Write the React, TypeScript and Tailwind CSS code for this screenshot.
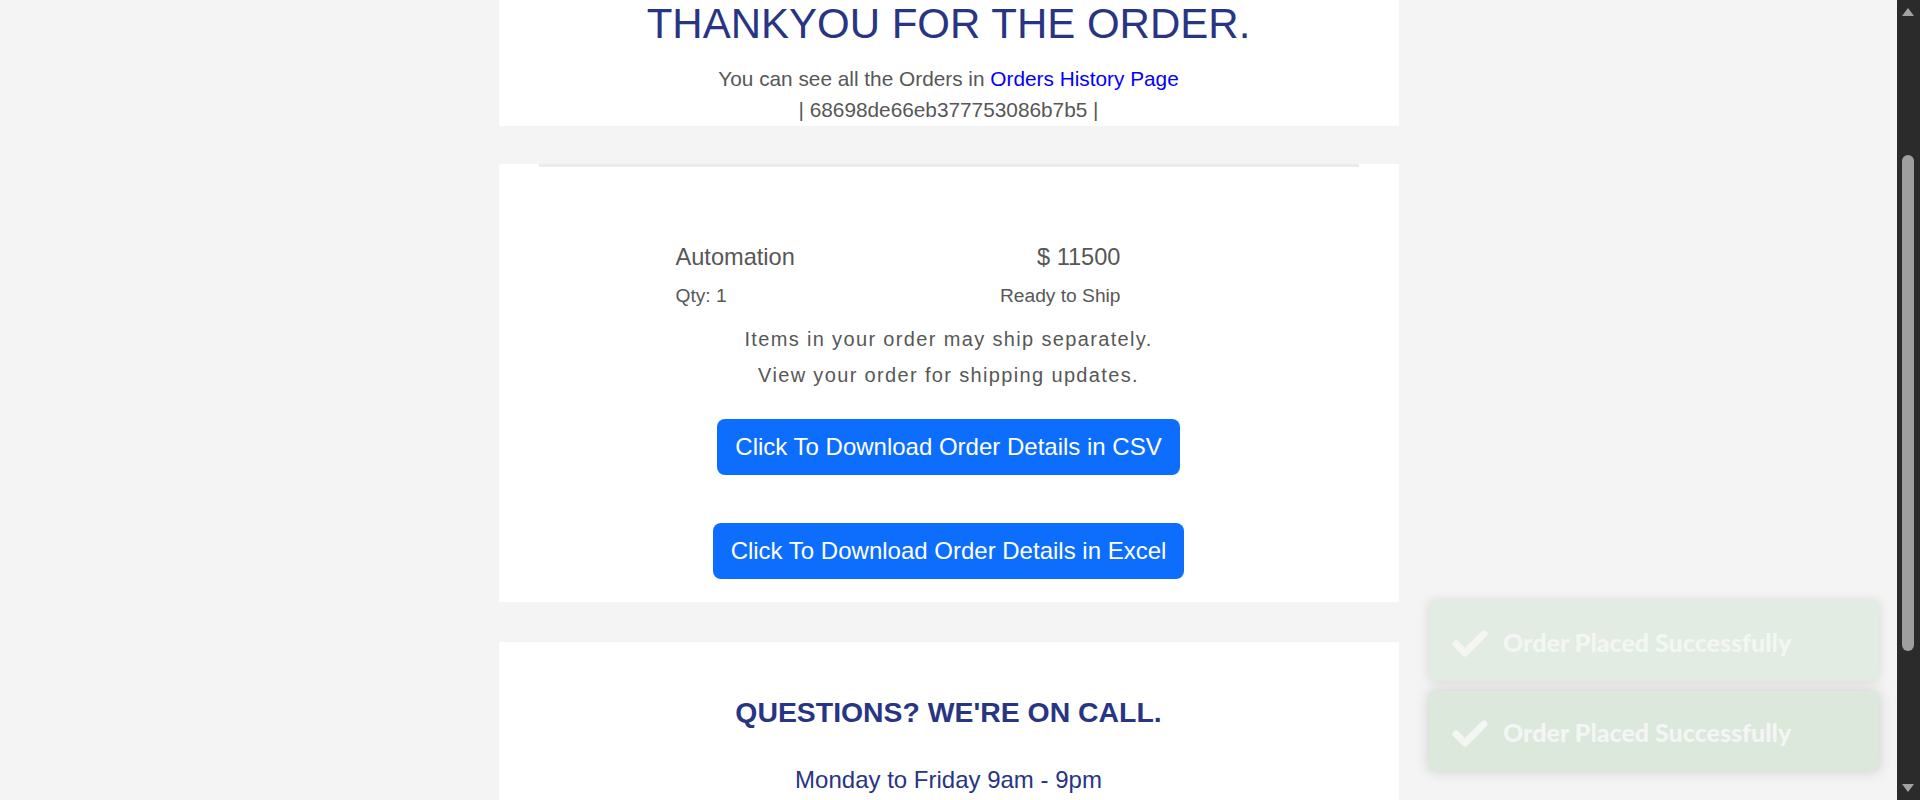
const NAVY = 'text-[#283583]';

function Toast({ tone }: { tone: string }) {
    return (
        <div className={`flex h-[80px] items-center rounded-[4px] pl-[22px] shadow-[0_0_12px_rgba(0,0,0,0.12)] ${tone}`}>
            <svg width="38" height="30" viewBox="0 0 38 30" className="mt-[3px] shrink-0">
                <polyline
                    points="5,16 14,25 33,6"
                    fill="none"
                    stroke="#f4f6f4"
                    strokeWidth="7"
                    strokeLinecap="round"
                    strokeLinejoin="round"
                />
            </svg>
            <span className="ml-[14px] mt-[3px] font-['Lato',sans-serif] text-[25px] font-black text-[#f4f6f4]">
                Order Placed Successfully
            </span>
        </div>
    );
}

function ScrollBar() {
    return (
        <div className="relative h-full w-[23px] shrink-0 bg-[#2b2b2b]">
            <svg width="14" height="10" viewBox="0 0 14 10" className="absolute left-[4px] top-[7px]">
                <polygon points="7,1 13,9 1,9" fill="#a3a3a3" />
            </svg>
            <div className="absolute left-[5px] top-[155px] h-[496px] w-[12px] rounded-full bg-[#9f9f9f]" />
            <svg width="14" height="10" viewBox="0 0 14 10" className="absolute bottom-[7px] left-[4px]">
                <polygon points="1,1 13,1 7,9" fill="#a3a3a3" />
            </svg>
        </div>
    );
}

export default function App() {
    return (
        <div className="flex h-[800px] overflow-hidden bg-[#f4f4f4] font-['Liberation_Sans',Arial,sans-serif]">
            <main className="relative flex-1">
                <div className="mx-auto w-[900px]">
                    {/* header */}
                    <section className="h-[126px] bg-white text-center">
                        <h1 className={`text-[42px] leading-[48px] ${NAVY}`}>THANKYOU FOR THE ORDER.</h1>
                        <p className="mt-[15px] text-[20.8px] leading-[31px] text-[#575757]">
                            You can see all the Orders in{' '}
                            <a href="#" className="text-[#0000ff]">
                                Orders History Page
                            </a>
                        </p>
                        <p className="text-[20.8px] leading-[31px] text-[#575757]">| 68698de66eb377753086b7b5 |</p>
                    </section>

                    {/* order items */}
                    <section className="mt-[38px] h-[438px] bg-white">
                        <div className="mx-10 h-[3px] bg-[#ececec]" />
                        <div className="ml-[177px] mt-[75px] w-[445px] text-[#575757]">
                            <div className="flex justify-between text-[23.6px] leading-[30px]">
                                <span>Automation</span>
                                <span>$ 11500</span>
                            </div>
                            <div className="mt-[11px] flex justify-between text-[19.2px] leading-[26px]">
                                <span>Qty: 1</span>
                                <span>Ready to Ship</span>
                            </div>
                        </div>
                        <div className="mt-[12px] text-center text-[20px] leading-[36px] tracking-[1.35px] text-[#575757]">
                            <p>Items in your order may ship separately.</p>
                            <p>View your order for shipping updates.</p>
                        </div>
                        <div className="mt-[26px] flex flex-col items-center gap-[48px]">
                            <button className="rounded-[8px] bg-[#0d6efd] px-[18px] py-[10px] text-[24px] leading-[36px] text-white">
                                Click To Download Order Details in CSV
                            </button>
                            <button className="rounded-[8px] bg-[#0d6efd] px-[18px] py-[10px] text-[24px] leading-[36px] text-white">
                                Click To Download Order Details in Excel
                            </button>
                        </div>
                    </section>

                    {/* contact */}
                    <section className="mt-[40px] h-[300px] bg-white pt-[53px] text-center">
                        <h2 className={`text-[28.4px] font-bold leading-[34px] ${NAVY}`}>QUESTIONS? WE'RE ON CALL.</h2>
                        <p className={`mt-[36px] text-[24px] leading-[30px] ${NAVY}`}>Monday to Friday 9am - 9pm</p>
                    </section>
                </div>

                <div className="absolute right-[18px] top-[601px] flex w-[450px] flex-col gap-[10px]">
                    <Toast tone="bg-[#e2ece3]" />
                    <Toast tone="bg-[#dce8dc] shadow-[0_0_14px_rgba(0,0,0,0.16)]" />
                </div>
            </main>
            <ScrollBar />
        </div>
    );
}
